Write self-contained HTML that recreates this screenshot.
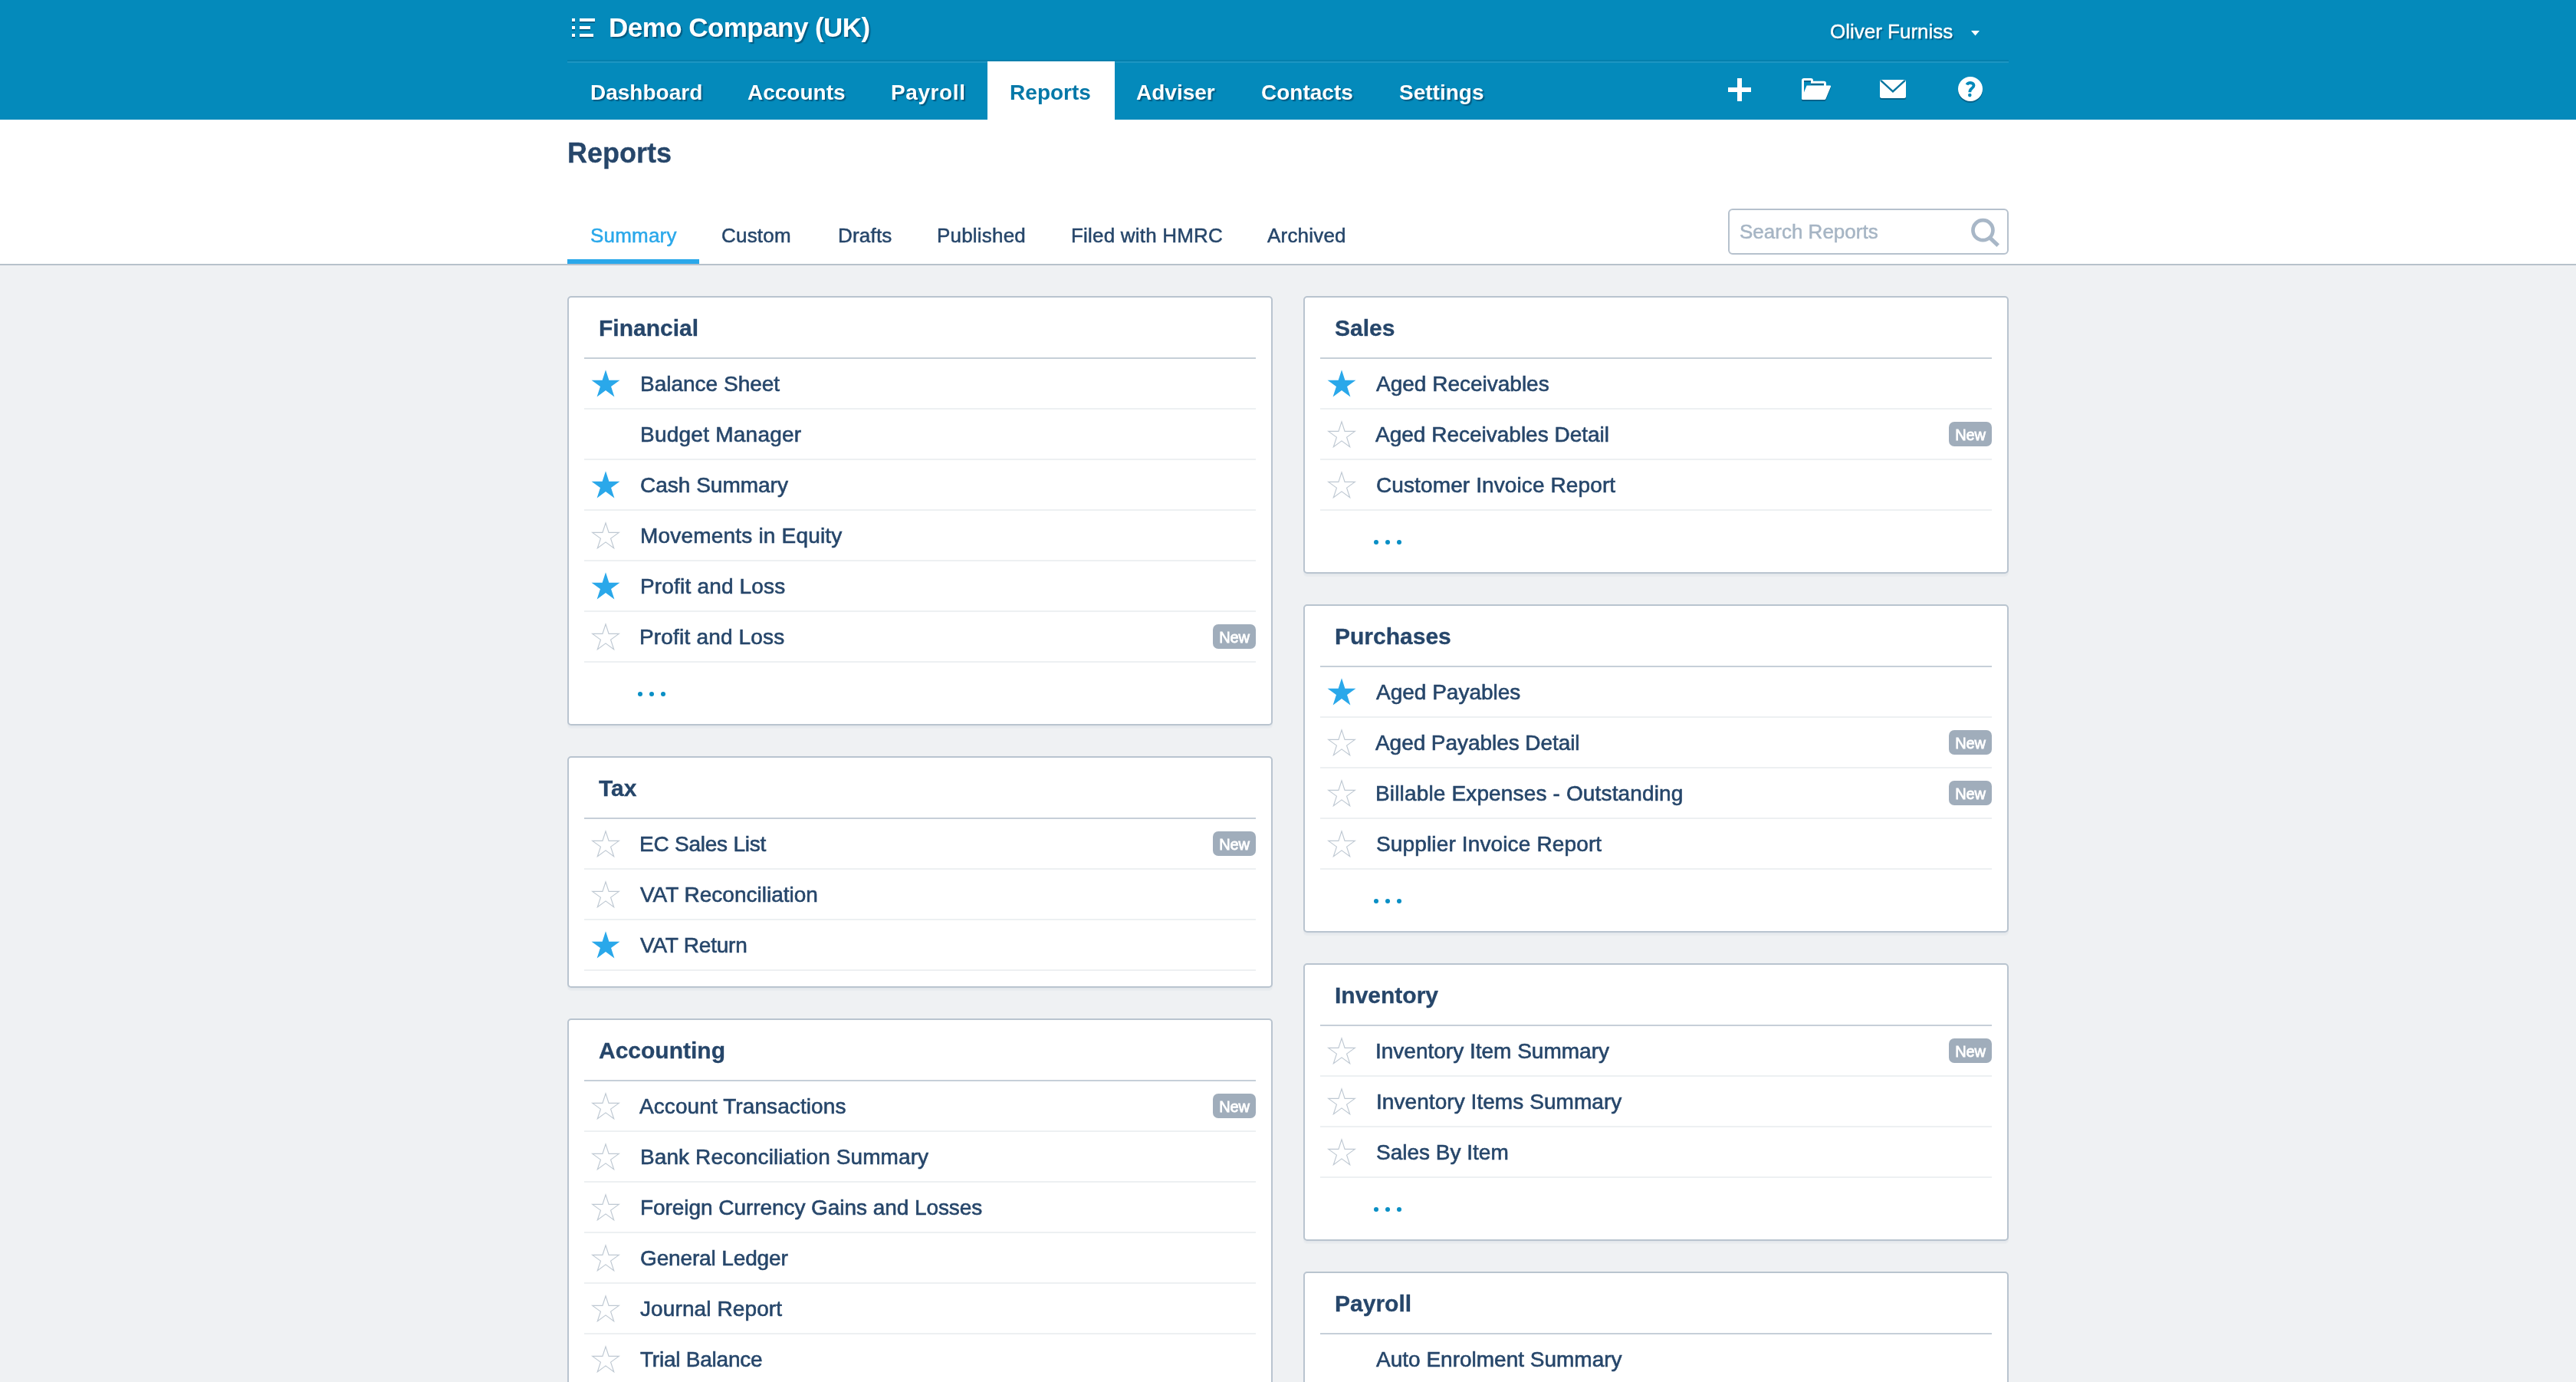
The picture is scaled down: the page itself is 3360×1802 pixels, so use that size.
<!DOCTYPE html>
<html>
<head>
<meta charset="utf-8">
<title>Reports</title>
<style>
html,body{margin:0;padding:0;}
body{opacity:0.9999;width:3360px;height:1802px;overflow:hidden;background:#eff1f3;font-family:"Liberation Sans",sans-serif;color:#26466a;position:relative;}
#hdr{position:absolute;left:0;top:0;width:3360px;height:156px;background:#048abb;}
#hdr .sep1{position:absolute;left:740px;top:78px;width:1880px;height:2px;background:#047fad;}
#hdr .sep2{position:absolute;left:740px;top:80px;width:1880px;height:2px;background:#1d95c2;}
.ts{text-shadow:2px 2px 1px rgba(0,45,75,.5);}
#org{position:absolute;left:794px;top:16px;font-size:35px;line-height:40px;letter-spacing:-0.55px;font-weight:bold;color:#fff;white-space:nowrap;}
#user{position:absolute;left:2387px;top:26px;font-size:26px;line-height:30px;color:#fff;-webkit-text-stroke:0.4px #fff;white-space:nowrap;}
.nav{position:absolute;top:80px;height:76px;line-height:82px;font-size:28px;font-weight:bold;color:#fff;white-space:nowrap;}
.nav.on{background:#fff;color:#0478a8;text-shadow:none;}
.nav.w{letter-spacing:0.6px;}
#hdr svg{position:absolute;overflow:visible;}
#sub{position:absolute;left:0;top:156px;width:3360px;height:188px;background:#fff;border-bottom:2px solid #b7c1cb;}
#title{position:absolute;left:740px;top:22px;font-size:36px;line-height:44px;font-weight:bold;color:#26466a;-webkit-text-stroke:0.3px #26466a;}
.tab{position:absolute;top:136px;font-size:26px;line-height:30px;letter-spacing:0.2px;-webkit-text-stroke:0.5px;color:#26466a;white-space:nowrap;}
.tab.on{color:#2aa8ea;}
#tabline{position:absolute;left:740px;top:182px;width:172px;height:6px;background:#2aa8ea;}
#search{position:absolute;left:2254px;top:116px;width:362px;height:56px;border:2px solid #b6c1cd;border-radius:6px;background:#fff;}
#search span{position:absolute;left:13px;top:13px;font-size:26px;line-height:30px;color:#a6b5c4;-webkit-text-stroke:0.5px #a6b5c4;white-space:nowrap;}
#search svg{position:absolute;left:310px;top:8px;}
.card{position:absolute;width:916px;border:2px solid #b9c4cf;border-radius:5px;background:#fff;box-shadow:0 2px 0 #e4e8ec,0 4px 0 #e9ecef;}
.card h3{margin:0 20px;height:78px;border-bottom:2px solid #c6cfd8;font-size:30px;line-height:80px;font-weight:bold;color:#26466a;padding-left:19px;-webkit-text-stroke:0.3px #26466a;white-space:nowrap;}
.row{position:relative;margin:0 20px;height:64px;border-bottom:2px solid #edf0f2;}
.row .t{position:absolute;left:73px;top:1px;font-size:28px;line-height:64px;color:#26466a;white-space:nowrap;-webkit-text-stroke:0.6px #26466a;}
.row.n .t{left:72px;}
.row svg.st{position:absolute;left:8px;top:14px;}
.row .new b{display:block;font-weight:normal;}
.row .new{position:absolute;right:0;top:16px;width:56px;height:32px;border-radius:7px;background:#a0adbb;color:#fff;font-size:20px;line-height:34px;text-align:center;letter-spacing:-0.25px;-webkit-text-stroke:0.8px #fff;}
.more{position:relative;height:80px;}
.more i{position:absolute;top:38px;width:6px;height:6px;border-radius:3px;background:#0a8fc5;}
.pad{height:20px;}
#org,#user,.nav,#title,.tab,#search span,.new b{will-change:transform;}
</style>
</head>
<body>
<svg width="0" height="0" style="position:absolute">
<defs>
<path id="star" d="M20 0.3 L24.36 13.7 L38.45 13.7 L27.05 22 L31.4 35.4 L20 27.1 L8.6 35.4 L12.95 22 L1.55 13.7 L15.64 13.7 Z"/>
</defs>
</svg>

<div id="hdr">
  <div class="sep1"></div><div class="sep2"></div>
  <div id="org" class="ts">Demo Company (UK)</div>
  <div id="user" class="ts">Oliver Furniss</div>
  <div class="nav ts" style="left:770px">Dashboard</div>
  <div class="nav ts" style="left:975px">Accounts</div>
  <div class="nav ts" style="left:1162px;letter-spacing:0.6px">Payroll</div>
  <div class="nav ts" style="left:1482px">Adviser</div>
  <div class="nav ts" style="left:1645px">Contacts</div>
  <div class="nav ts" style="left:1825px">Settings</div>
  <div class="nav on" style="left:1288px;width:164px;padding-right:2px;text-align:center">Reports</div>

  <svg id="menu" style="left:746px;top:24px" width="32" height="28">
    <g fill="#03628a"><rect x="0" y="2" width="4" height="4"/><rect x="10" y="2" width="20" height="4"/><rect x="0" y="12" width="4" height="4"/><rect x="10" y="12" width="14" height="4"/><rect x="0" y="22" width="4" height="4"/><rect x="10" y="22" width="18" height="4"/></g>
    <g fill="#fff"><rect x="0" y="0" width="4" height="4"/><rect x="10" y="0" width="20" height="4"/><rect x="0" y="10" width="4" height="4"/><rect x="10" y="10" width="14" height="4"/><rect x="0" y="20" width="4" height="4"/><rect x="10" y="20" width="18" height="4"/></g>
  </svg>
  <svg id="caret" style="left:2571px;top:40px" width="12" height="8"><path d="M0 0H11L5.5 6.5Z" fill="#fff"/></svg>
  <svg id="plus" style="left:2254px;top:102px" width="30" height="30"><path d="M12 0h6v12h12v6H18v12h-6V18H0v-6h12z" fill="#fff"/></svg>
  <svg id="folder" style="left:2350px;top:102px" width="40" height="32">
    <g fill="#03628a" stroke="#03628a" transform="translate(0,2)"><path d="M1.5 27V3Q1.5 1.5 3 1.5H12Q13.5 1.5 13.5 3V5.3H29Q30.5 5.3 30.5 7V10" fill="none" stroke-width="3"/><path d="M6.6 9.5H37.2Q38.6 9.5 38 11L31.4 27Q30.9 28 29.8 28H1.5Q0 28 0 26.5V18.5H3Z" stroke="none"/></g><g fill="#fff" stroke="#fff"><path d="M1.5 27V3Q1.5 1.5 3 1.5H12Q13.5 1.5 13.5 3V5.3H29Q30.5 5.3 30.5 7V10" fill="none" stroke-width="3"/><path d="M6.6 9.5H37.2Q38.6 9.5 38 11L31.4 27Q30.9 28 29.8 28H1.5Q0 28 0 26.5V18.5H3Z" stroke="none"/></g>
  </svg>
  <svg id="mail" style="left:2452px;top:104px" width="34" height="28">
    <rect x="0" y="2" width="34" height="24" rx="2.5" fill="#03628a"/><rect x="0" y="0" width="34" height="24" rx="2.5" fill="#fff"/>
    <path d="M1.2 0.8L17 15.4L32.8 0.8" fill="none" stroke="#04749f" stroke-width="2.4"/>
  </svg>
  <svg id="help" style="left:2554px;top:100px" width="32" height="36">
    <circle cx="16" cy="18" r="16" fill="#03628a"/><circle cx="16" cy="16" r="16" fill="#fff"/>
    <g transform="translate(16,16)"><path d="M-4.5,-5.5C-3.7,-7.3 -1.9,-8 0.2,-8C2.9,-8 4.5,-6.4 4.5,-4.5C4.5,-2.7 3.3,-1.7 1.7,-0.5C0.1,0.7 -0.7,1.7 -0.7,4.2" fill="none" stroke="#0589ba" stroke-width="3.8"/><circle cx="-0.7" cy="8.1" r="2.3" fill="#0589ba"/></g>
  </svg>
</div>

<div id="sub">
  <div id="title">Reports</div>
  <div class="tab on" style="left:770px">Summary</div>
  <div class="tab" style="left:941px">Custom</div>
  <div class="tab" style="left:1093px">Drafts</div>
  <div class="tab" style="left:1222px">Published</div>
  <div class="tab" style="left:1397px">Filed with HMRC</div>
  <div class="tab" style="left:1653px">Archived</div>
  <div id="tabline"></div>
  <div id="search"><span>Search Reports</span><svg width="44" height="44"><circle cx="20.45" cy="18.2" r="13" fill="none" stroke="#a8b7c7" stroke-width="4.7"/><path d="M29.6 28.2L40.2 38.1" stroke="#a8b7c7" stroke-width="5.2" fill="none"/></svg></div>
</div>

<div class="card" style="left:740px;top:386px">
  <h3>Financial</h3>
  <div class="row"><svg class="st" width="40" height="38"><use href="#star" fill="#2aa8ea"/></svg><span class="t">Balance Sheet</span></div>
  <div class="row"><span class="t" style="letter-spacing:0.24px">Budget Manager</span></div>
  <div class="row"><svg class="st" width="40" height="38"><use href="#star" fill="#2aa8ea"/></svg><span class="t">Cash Summary</span></div>
  <div class="row"><svg class="st" width="40" height="38"><use href="#star" fill="none" stroke="#bec8d2" stroke-width="1.25" transform="translate(20 19.7) scale(.935) translate(-20 -19.4)"/></svg><span class="t" style="letter-spacing:0.19px">Movements in Equity</span></div>
  <div class="row"><svg class="st" width="40" height="38"><use href="#star" fill="#2aa8ea"/></svg><span class="t" style="letter-spacing:0.18px">Profit and Loss</span></div>
  <div class="row n"><svg class="st" width="40" height="38"><use href="#star" fill="none" stroke="#bec8d2" stroke-width="1.25" transform="translate(20 19.7) scale(.935) translate(-20 -19.4)"/></svg><span class="t" style="letter-spacing:0.18px">Profit and Loss</span><span class="new"><b>New</b></span></div>
  <div class="more"><i style="left:90px"></i><i style="left:105px"></i><i style="left:120px"></i></div>
</div>

<div class="card" style="left:740px;top:986px">
  <h3>Tax</h3>
  <div class="row n"><svg class="st" width="40" height="38"><use href="#star" fill="none" stroke="#bec8d2" stroke-width="1.25" transform="translate(20 19.7) scale(.935) translate(-20 -19.4)"/></svg><span class="t" style="letter-spacing:-0.23px">EC Sales List</span><span class="new"><b>New</b></span></div>
  <div class="row"><svg class="st" width="40" height="38"><use href="#star" fill="none" stroke="#bec8d2" stroke-width="1.25" transform="translate(20 19.7) scale(.935) translate(-20 -19.4)"/></svg><span class="t">VAT Reconciliation</span></div>
  <div class="row"><svg class="st" width="40" height="38"><use href="#star" fill="#2aa8ea"/></svg><span class="t" style="letter-spacing:-0.2px">VAT Return</span></div>
  <div class="pad"></div>
</div>

<div class="card" style="left:740px;top:1328px">
  <h3>Accounting</h3>
  <div class="row n"><svg class="st" width="40" height="38"><use href="#star" fill="none" stroke="#bec8d2" stroke-width="1.25" transform="translate(20 19.7) scale(.935) translate(-20 -19.4)"/></svg><span class="t" style="letter-spacing:0.09px">Account Transactions</span><span class="new"><b>New</b></span></div>
  <div class="row"><svg class="st" width="40" height="38"><use href="#star" fill="none" stroke="#bec8d2" stroke-width="1.25" transform="translate(20 19.7) scale(.935) translate(-20 -19.4)"/></svg><span class="t" style="letter-spacing:0.1px">Bank Reconciliation Summary</span></div>
  <div class="row"><svg class="st" width="40" height="38"><use href="#star" fill="none" stroke="#bec8d2" stroke-width="1.25" transform="translate(20 19.7) scale(.935) translate(-20 -19.4)"/></svg><span class="t" style="letter-spacing:-0.06px">Foreign Currency Gains and Losses</span></div>
  <div class="row"><svg class="st" width="40" height="38"><use href="#star" fill="none" stroke="#bec8d2" stroke-width="1.25" transform="translate(20 19.7) scale(.935) translate(-20 -19.4)"/></svg><span class="t" style="letter-spacing:-0.14px">General Ledger</span></div>
  <div class="row"><svg class="st" width="40" height="38"><use href="#star" fill="none" stroke="#bec8d2" stroke-width="1.25" transform="translate(20 19.7) scale(.935) translate(-20 -19.4)"/></svg><span class="t" style="letter-spacing:0.11px">Journal Report</span></div>
  <div class="row"><svg class="st" width="40" height="38"><use href="#star" fill="none" stroke="#bec8d2" stroke-width="1.25" transform="translate(20 19.7) scale(.935) translate(-20 -19.4)"/></svg><span class="t" style="letter-spacing:-0.23px">Trial Balance</span></div>
  <div class="row"><svg class="st" width="40" height="38"><use href="#star" fill="none" stroke="#bec8d2" stroke-width="1.25" transform="translate(20 19.7) scale(.935) translate(-20 -19.4)"/></svg><span class="t"></span></div>
  <div class="more"><i style="left:90px"></i><i style="left:105px"></i><i style="left:120px"></i></div>
</div>

<div class="card" style="left:1700px;top:386px">
  <h3>Sales</h3>
  <div class="row"><svg class="st" width="40" height="38"><use href="#star" fill="#2aa8ea"/></svg><span class="t">Aged Receivables</span></div>
  <div class="row n"><svg class="st" width="40" height="38"><use href="#star" fill="none" stroke="#bec8d2" stroke-width="1.25" transform="translate(20 19.7) scale(.935) translate(-20 -19.4)"/></svg><span class="t">Aged Receivables Detail</span><span class="new"><b>New</b></span></div>
  <div class="row"><svg class="st" width="40" height="38"><use href="#star" fill="none" stroke="#bec8d2" stroke-width="1.25" transform="translate(20 19.7) scale(.935) translate(-20 -19.4)"/></svg><span class="t" style="letter-spacing:0.11px">Customer Invoice Report</span></div>
  <div class="more"><i style="left:90px"></i><i style="left:105px"></i><i style="left:120px"></i></div>
</div>

<div class="card" style="left:1700px;top:788px">
  <h3>Purchases</h3>
  <div class="row"><svg class="st" width="40" height="38"><use href="#star" fill="#2aa8ea"/></svg><span class="t">Aged Payables</span></div>
  <div class="row n"><svg class="st" width="40" height="38"><use href="#star" fill="none" stroke="#bec8d2" stroke-width="1.25" transform="translate(20 19.7) scale(.935) translate(-20 -19.4)"/></svg><span class="t" style="letter-spacing:-0.06px">Aged Payables Detail</span><span class="new"><b>New</b></span></div>
  <div class="row n"><svg class="st" width="40" height="38"><use href="#star" fill="none" stroke="#bec8d2" stroke-width="1.25" transform="translate(20 19.7) scale(.935) translate(-20 -19.4)"/></svg><span class="t" style="letter-spacing:0.15px">Billable Expenses - Outstanding</span><span class="new"><b>New</b></span></div>
  <div class="row"><svg class="st" width="40" height="38"><use href="#star" fill="none" stroke="#bec8d2" stroke-width="1.25" transform="translate(20 19.7) scale(.935) translate(-20 -19.4)"/></svg><span class="t" style="letter-spacing:0.14px">Supplier Invoice Report</span></div>
  <div class="more"><i style="left:90px"></i><i style="left:105px"></i><i style="left:120px"></i></div>
</div>

<div class="card" style="left:1700px;top:1256px">
  <h3>Inventory</h3>
  <div class="row n"><svg class="st" width="40" height="38"><use href="#star" fill="none" stroke="#bec8d2" stroke-width="1.25" transform="translate(20 19.7) scale(.935) translate(-20 -19.4)"/></svg><span class="t">Inventory Item Summary</span><span class="new"><b>New</b></span></div>
  <div class="row"><svg class="st" width="40" height="38"><use href="#star" fill="none" stroke="#bec8d2" stroke-width="1.25" transform="translate(20 19.7) scale(.935) translate(-20 -19.4)"/></svg><span class="t" style="letter-spacing:0.06px">Inventory Items Summary</span></div>
  <div class="row"><svg class="st" width="40" height="38"><use href="#star" fill="none" stroke="#bec8d2" stroke-width="1.25" transform="translate(20 19.7) scale(.935) translate(-20 -19.4)"/></svg><span class="t">Sales By Item</span></div>
  <div class="more"><i style="left:90px"></i><i style="left:105px"></i><i style="left:120px"></i></div>
</div>

<div class="card" style="left:1700px;top:1658px">
  <h3>Payroll</h3>
  <div class="row"><span class="t">Auto Enrolment Summary</span></div>
  <div class="row"><span class="t"></span></div>
  <div class="row"><span class="t"></span></div>
  <div class="more"><i style="left:90px"></i><i style="left:105px"></i><i style="left:120px"></i></div>
</div>

</body>
</html>
